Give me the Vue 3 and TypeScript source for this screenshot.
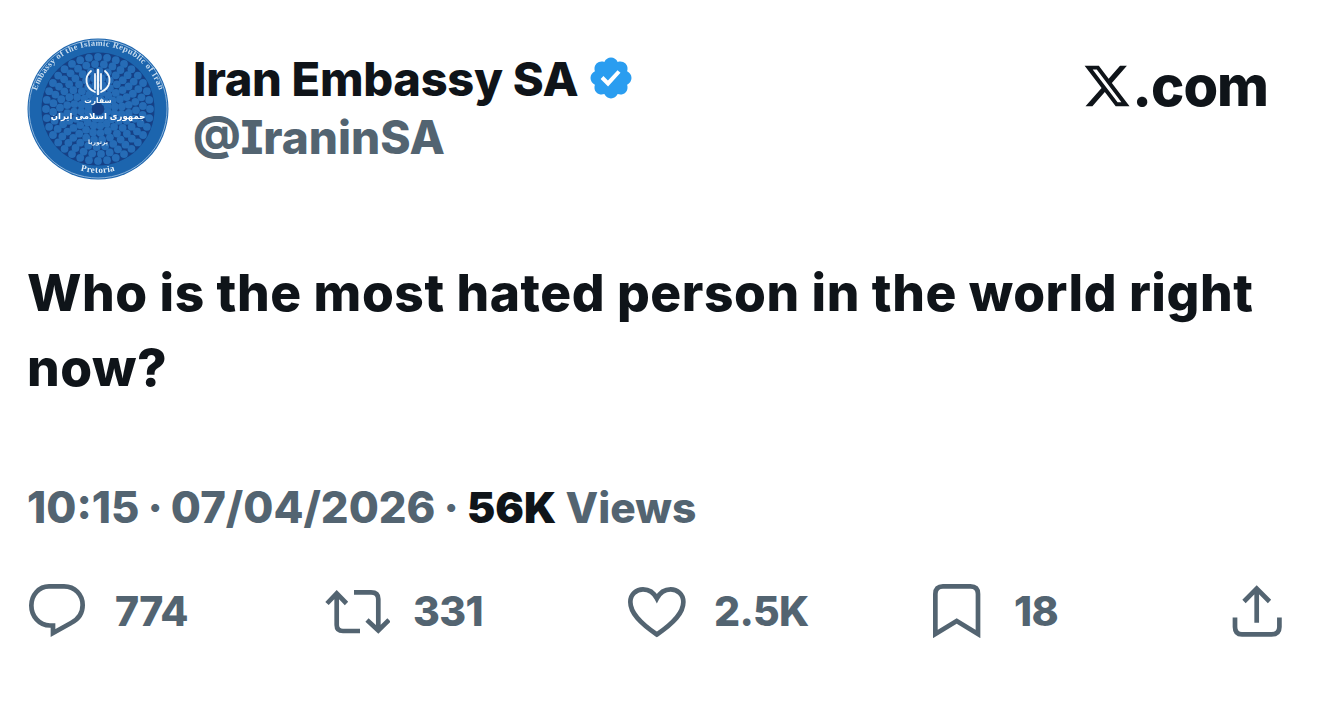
<script setup lang="ts">
interface Stat { id: string; label: string; w: number; d: string }

const stats: Stat[] = [
  { id: 'reply', label: '774', w: 63, d: 'M20 2.35H35C46 2.35 53.65 11 53.65 21C53.65 30 48 36 42 39L24 49V41.5H21C10 41.5 2.35 32 2.35 21.5C2.35 11 10 2.35 20 2.35Z' },
  { id: 'retweet', label: '331', w: 65, d: 'M2 19.5L11.7 9.3L21.5 19.500M11.7 9.5V41Q11.7 47 18 47H35M29 8.3H46Q53.3 8.3 53.3 15V46M42 36L53.3 46.5L64 36' },
  { id: 'like', label: '2.5K', w: 63, d: 'M28.85 50.5C12 39 2.35 29 2.35 18C2.35 10 8.5 5.4 15 5.4C21 5.4 26 9 28.85 14.5C31.7 9 36.7 5.4 42.7 5.400C49.2 5.4 55.35 10 55.35 18C55.35 29 45.7 39 28.85 50.5Z' },
  { id: 'bookmark', label: '18', w: 58, d: 'M2.35 50V10Q2.35 2.35 10 2.35H37.4Q45 2.35 45 10V50L23.7 37Z' },
  { id: 'share', label: '', w: 50, d: 'M12 17.5L24.7 4.6L37.500 17.5M24.7 5V38.7M3 33.6V43Q3 50.4 10 50.4H39.5Q47.4 50.4 47.4 43V33.6' }
]

interface Dot { x: number; y: number; r: number }
const dots: Dot[] = []
for (let ring = 0; ring < 7; ring++) {
  const radius = 52 - ring * 7
  const count = Math.max(8, 36 - ring * 4)
  for (let i = 0; i < count; i++) {
    const a = (i / count) * Math.PI * 2 + ring * 0.13
    dots.push({ x: 71 + Math.cos(a) * radius, y: 71 + Math.sin(a) * radius, r: 3.9 })
  }
}
</script>

<template>
  <main class="tweet">
    <header class="head">
      <svg class="avatar" viewBox="0 0 142 142" role="img" aria-label="Embassy seal">
        <defs>
          <path id="arcTop" d="M8 83a64 64 0 1 1 126 0" />
          <path id="arcBottom" d="M30 120a64 64 0 0 0 82 0" />
          <filter id="soft"><feGaussianBlur stdDeviation="0.45" /></filter>
        </defs>
        <g filter="url(#soft)">
          <circle cx="71" cy="71" r="70.5" fill="#1c65ae" />
          <circle cx="71" cy="71" r="56.500" fill="#134186" />
          <circle v-for="(d, i) in dots" :key="i" :cx="d.x" :cy="d.y" :r="d.r" fill="#256cb6" />
          <circle cx="71" cy="71" r="69" fill="none" stroke="#a9c8e4" stroke-width="0.8" />
          <text class="seal-en" fill="#c8dcee"><textPath href="#arcTop" startOffset="50%" text-anchor="middle">Embassy of the Islamic Republic of Iran</textPath></text>
          <text class="seal-en seal-pretoria" fill="#e2edf6"><textPath href="#arcBottom" startOffset="50%" text-anchor="middle">Pretoria</textPath></text>
          <g fill="none" stroke="#f2f7fb" stroke-width="1.8" stroke-linecap="round">
            <path d="M64 33c-7 6-6 17 4 21" />
            <path d="M78 33c7 6 6 17-4 21" />
            <path d="M68 36v15" />
            <path d="M74 36v15" />
            <path d="M71 32v24" stroke-width="2.400" />
          </g>
          <text class="seal-fa" x="71" y="65" font-size="7.500" fill="#f4f8fb">سفارت</text>
          <text class="seal-fa" x="71" y="81" font-size="8.500" fill="#fff">جمهوری اسلامی ایران</text>
          <text class="seal-fa" x="71" y="106" font-size="6" fill="#e6eff7">پرتوریا</text>
        </g>
      </svg>
      <div class="names">
        <div class="display">
          <span>Iran Embassy SA</span>
          <svg class="badge" viewBox="0 0 24 24" aria-label="Verified">
            <path fill="#2a9df0" d="M22.25 12c0-1.43-.88-2.67-2.19-3.34.46-1.39.2-2.9-.81-3.91s-2.52-1.27-3.91-.81c-.66-1.31-1.91-2.19-3.34-2.19s-2.67.88-3.33 2.19c-1.4-.46-2.91-.2-3.92.81s-1.26 2.52-.8 3.91c-1.31.67-2.2 1.91-2.2 3.34s.89 2.67 2.2 3.34c-.46 1.39-.21 2.9.8 3.91s2.52 1.26 3.91.81c.67 1.31 1.91 2.19 3.34 2.19s2.68-.88 3.34-2.19c1.39.45 2.9.2 3.91-.81s1.27-2.52.81-3.91c1.31-.67 2.19-1.91 2.19-3.34zm-11.71 4.2L6.8 12.46l1.41-1.42 2.26 2.26 4.8-5.23 1.47 1.36-6.2 6.77z" />
          </svg>
        </div>
        <div class="handle">@IraninSA</div>
      </div>
      <div class="brand">
        <svg class="xlogo" viewBox="0 0 24 24" aria-hidden="true">
          <path d="M18.244 2.25h3.308l-7.227 8.26 8.502 11.24H16.17l-5.214-6.817L4.99 21.75H1.68l7.73-8.835L1.254 2.25H8.08l4.713 6.231zm-1.161 17.52h1.833L7.084 4.126H5.117z" />
        </svg>
        <span>.com</span>
      </div>
    </header>

    <p class="body">Who is the most hated person in the world right now?</p>

    <div class="meta"><span class="stamp">10:15 · 07/04/2026 · </span><b>56K</b> Views</div>

    <div class="actions">
      <div v-for="s in stats" :key="s.id" class="action">
        <svg class="icon" :width="s.w" height="54" :viewBox="`0 0 ${s.w} 54`" aria-hidden="true"><path :d="s.d" /></svg>
        <span v-if="s.label">{{ s.label }}</span>
      </div>
    </div>
  </main>
</template>

<style>
html, body { margin: 0; background: #fff; }
</style>

<style scoped>
.tweet {
  width: 1320px;
  height: 705px;
  box-sizing: border-box;
  padding: 38px 38px 0 27px;
  background: #fff;
  color: #0f1419;
  font-family: Inter, "Liberation Sans", sans-serif;
  font-weight: 800;
  overflow: hidden;
}
.head { display: flex; align-items: flex-start; height: 142px; }
.avatar { width: 142px; height: 142px; flex: none; }
.seal-en { font-family: "Liberation Serif", serif; font-weight: 700; font-size: 8.5px; letter-spacing: 0.4px; }
.seal-pretoria { font-size: 9px; }
.seal-fa { font-family: "DejaVu Sans", sans-serif; font-weight: 700; text-anchor: middle; }
.names { margin-left: 24px; margin-top: 11px; flex: 1; }
.display { display: flex; align-items: center; height: 58px; font-size: 47px; letter-spacing: -0.3px; }
.badge { width: 48px; height: 48px; margin-left: 9px; }
.handle { height: 60px; line-height: 60px; font-size: 46px; color: #536471; font-feature-settings: "cv08"; }
.brand { display: flex; align-items: center; margin: 18px 14px 0 0; font-size: 56px; line-height: 60px; letter-spacing: -1px; }
.xlogo { width: 50px; height: 50px; fill: #0f1419; }
.body { margin: 75px 0 0; width: 1245px; font-size: 51.5px; line-height: 75px; letter-spacing: 0.55px; }
.meta { margin-top: 73px; font-size: 42.5px; line-height: 60px; color: #536471; white-space: pre; }
.stamp { font-size: 43.6px; word-spacing: -1.5px; }
.meta b { color: #0f1419; }
.actions { display: grid; grid-template-columns: 296px 303px 305px 299px auto; margin: 46px 0 0 2px; }
.action { display: flex; align-items: center; height: 54px; gap: 23px; color: #536471; font-size: 41px; letter-spacing: -0.7px; }
.icon { fill: none; stroke: #536471; stroke-width: 4.7; flex: none; }
</style>
